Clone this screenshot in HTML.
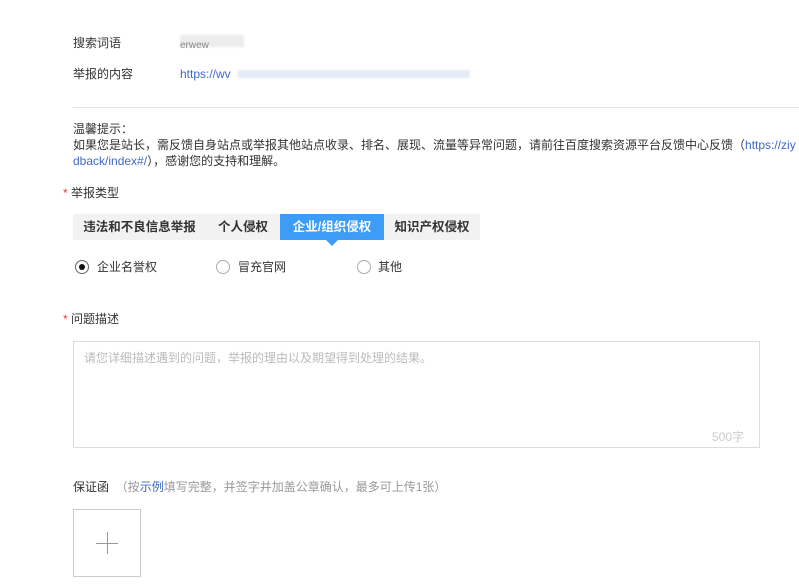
<!DOCTYPE html>
<html><head><meta charset="utf-8"><style>
*{margin:0;padding:0;box-sizing:border-box}
body{width:799px;height:584px;background:#fff;position:relative;overflow:hidden;font-family:"Liberation Sans","Noto Sans CJK SC","WenQuanYi Zen Hei",sans-serif;font-size:12px;color:#333}
.a{position:absolute;white-space:nowrap;line-height:16px}
.blue{color:#3f68c4}
.star{color:#e4393c}
.tab{position:absolute;top:214px;height:26px;line-height:26px;text-align:center;font-weight:bold;font-size:12.5px;background:#f2f2f2;color:#333}
.radio{position:absolute;top:260px;width:14px;height:14px;border:1px solid #aaa;border-radius:50%;background:#fff}
</style></head><body>
<div class="a" style="left:73px;top:35px">搜索词语</div>
<div class="a" style="left:180px;top:35px;width:64px;height:12px;background:#ececec;filter:blur(1px)"></div>
<div class="a" style="left:180px;top:38px;color:#888;font-size:10px">erwew</div>
<div class="a" style="left:73px;top:66px">举报的内容</div>
<div class="a blue" style="left:180px;top:66px">https://wv</div>
<div class="a" style="left:238px;top:70px;width:232px;height:8px;background:#e6eaf7;filter:blur(1px)"></div>
<div class="a" style="left:73px;top:107px;width:726px;height:1px;background:#e5e5e5"></div>
<div class="a" style="left:73px;top:121px">温馨提示：</div>
<div class="a" style="left:73px;top:137px">如果您是站长，需反馈自身站点或举报其他站点收录、排名、展现、流量等异常问题，请前往百度搜索资源平台反馈中心反馈（<span class="blue">https://ziy</span></div>
<div class="a" style="left:73px;top:153px"><span class="blue">dback/index#/</span>），感谢您的支持和理解。</div>
<div class="a" style="left:63px;top:185px"><span class="star">*</span> 举报类型</div>
<div class="tab" style="left:73px;width:133px">违法和不良信息举报</div>
<div class="tab" style="left:206px;width:74px">个人侵权</div>
<div class="tab" style="left:280px;width:104px;background:#3d9cf5;color:#fff">企业/组织侵权</div>
<div class="a" style="left:326px;top:240px;width:0;height:0;border-left:6px solid transparent;border-right:6px solid transparent;border-top:6px solid #3d9cf5"></div>
<div class="tab" style="left:384px;width:96px">知识产权侵权</div>
<div class="radio" style="left:75px;border-color:#666"><div style="position:absolute;left:3px;top:3px;width:6px;height:6px;border-radius:50%;background:#111"></div></div>
<div class="a" style="left:97px;top:259px">企业名誉权</div>
<div class="radio" style="left:216px"></div>
<div class="a" style="left:238px;top:259px">冒充官网</div>
<div class="radio" style="left:357px"></div>
<div class="a" style="left:378px;top:259px">其他</div>
<div class="a" style="left:63px;top:311px"><span class="star">*</span> 问题描述</div>
<div class="a" style="left:73px;top:341px;width:687px;height:107px;border:1px solid #ddd"></div>
<div class="a" style="left:84px;top:350px;color:#bbb">请您详细描述遇到的问题，举报的理由以及期望得到处理的结果。</div>
<div class="a" style="left:712px;top:429px;color:#ccc">500字</div>
<div class="a" style="left:73px;top:479px">保证函 <span style="color:#999">&nbsp;（按<span class="blue">示例</span>填写完整，并签字并加盖公章确认，最多可上传1张）</span></div>
<div class="a" style="left:73px;top:509px;width:68px;height:68px;border:1px solid #ccc">
<div style="position:absolute;left:22px;top:33px;width:22px;height:1px;background:#999"></div>
<div style="position:absolute;left:33px;top:22px;width:1px;height:22px;background:#999"></div>
</div>
</body></html>
